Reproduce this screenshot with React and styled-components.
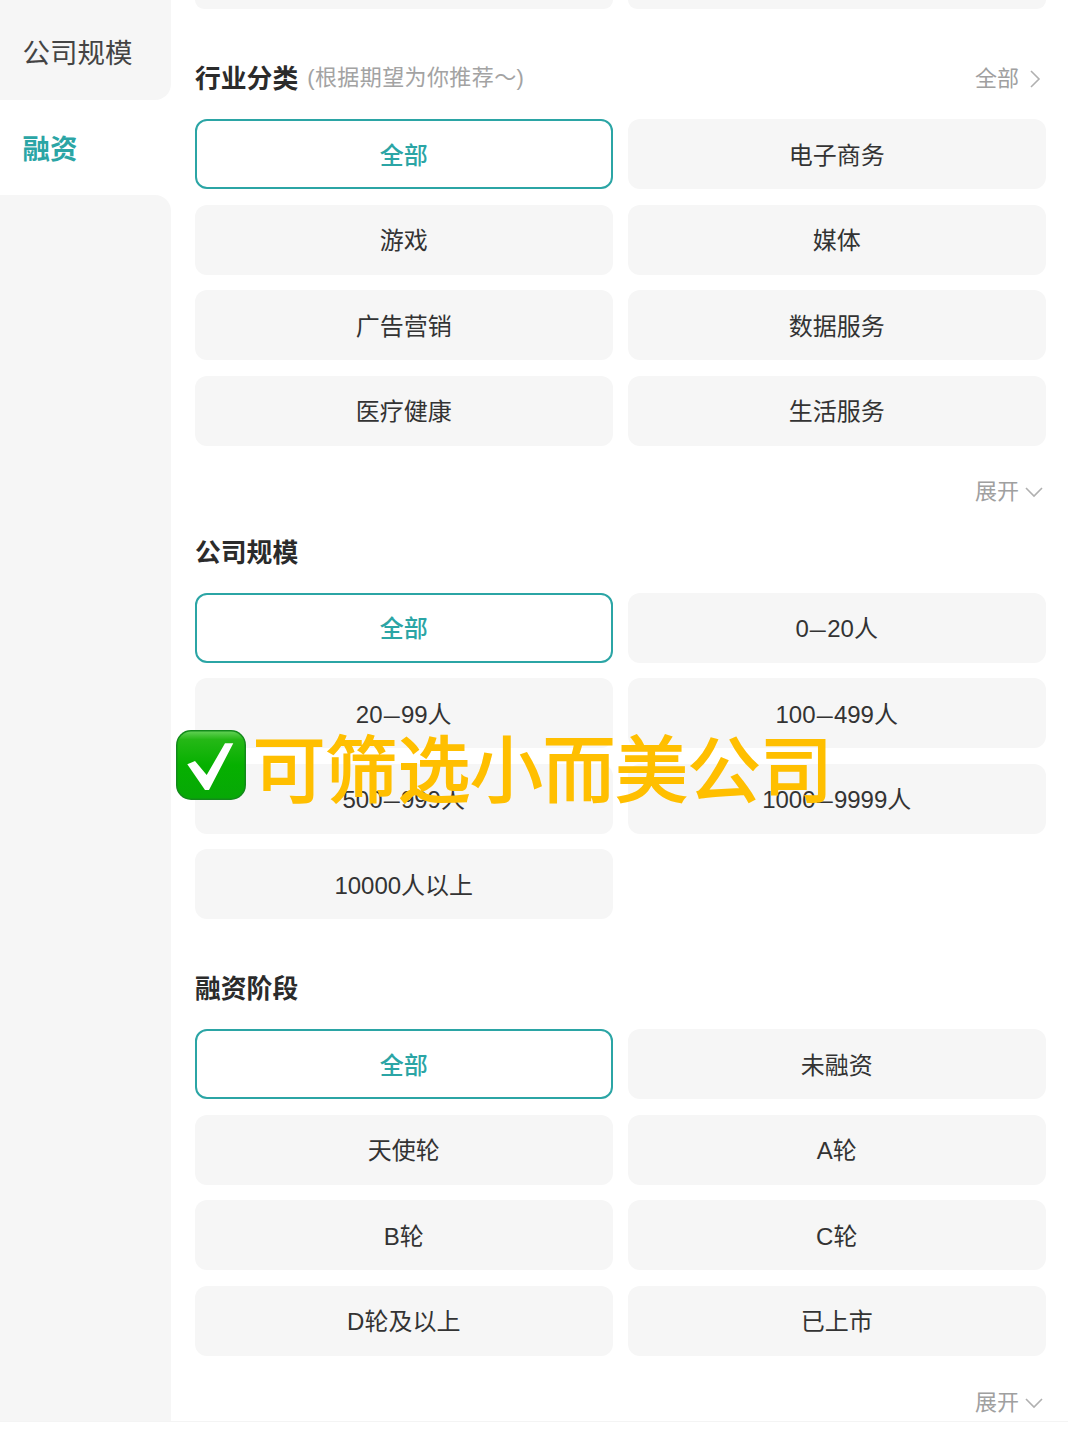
import React from 'react';
import styled, { createGlobalStyle } from 'styled-components';

const teal = '#2ba5a5';
const fontStack = '"Liberation Sans", "Noto Sans CJK SC", sans-serif';

const GlobalStyle = createGlobalStyle`
  html, body {
    margin: 0;
    padding: 0;
    background: #fff;
  }
  body {
    font-family: ${fontStack};
    color: #333;
  }
`;

const Page = styled.div`
  position: relative;
  width: 1080px;
  height: 1440px;
  overflow: hidden;
  display: flex;
  align-items: flex-start;
`;

const Sidebar = styled.div`
  width: 171px;
  height: 1422px;
  flex: none;
  display: flex;
  flex-direction: column;
`;

const SideItem = styled.div`
  height: ${p => p.$height}px;
  flex: ${p => (p.$grow ? 1 : 'none')};
  box-sizing: border-box;
  padding-left: 22.5px;
  padding-top: ${p => p.$top}px;
  font-size: 27.5px;
  line-height: 40px;
  background: ${p => (p.$active ? '#fff' : '#f6f6f6')};
  color: ${p => (p.$active ? teal : '#444')};
  font-weight: ${p => (p.$active ? 700 : 400)};
  border-radius: ${p => p.$radius || '0'};
`;

const Main = styled.div`
  width: 850px;
  margin-left: 24px;
  flex: none;
`;

const Stubs = styled.div`
  display: grid;
  grid-template-columns: 417.5px 417.5px;
  column-gap: 15.5px;
  height: 9px;
`;

const Stub = styled.div`
  background: #f6f6f6;
  border-radius: 0 0 12px 12px;
`;

const SectionHead = styled.div`
  display: flex;
  align-items: center;
  justify-content: space-between;
  height: 40px;
  margin-top: ${p => p.$top}px;
  margin-bottom: ${p => p.$bottom}px;
`;

const TitleWrap = styled.div`
  display: flex;
  align-items: center;
`;

const Title = styled.span`
  font-size: 25.8px;
  line-height: 40px;
  font-weight: 700;
  color: #2b2b2b;
`;

const Hint = styled.span`
  margin-left: 9px;
  margin-top: -2px;
  font-size: 22px;
  line-height: 40px;
  letter-spacing: 0.4px;
  color: #a3a3a3;
`;

const More = styled.div`
  display: flex;
  align-items: center;
  gap: ${p => p.$gap}px;
  font-size: 22px;
  line-height: 32px;
  color: #a0a0a0;
  margin-right: ${p => p.$right}px;
`;

const Grid = styled.div`
  display: grid;
  grid-template-columns: 417.5px 417.5px;
  grid-auto-rows: 70px;
  column-gap: 15.5px;
  row-gap: 15.5px;
`;

const Option = styled.div`
  box-sizing: border-box;
  display: flex;
  align-items: center;
  justify-content: center;
  padding-bottom: 2px;
  font-size: 24px;
  border-radius: 12px;
  background: ${p => (p.$selected ? '#fff' : '#f6f6f6')};
  border: ${p => (p.$selected ? `2px solid ${teal}` : 'none')};
  color: ${p => (p.$selected ? teal : '#333')};
  font-weight: ${p => (p.$selected ? 500 : 400)};
`;

const Dash = styled.span`
  display: inline-block;
  margin: 0 2.5px;
  transform: scaleX(1.2);
`;

const Foot = styled.div`
  display: flex;
  justify-content: flex-end;
  height: 32px;
  margin-top: ${p => p.$top}px;
`;

const BottomLine = styled.div`
  position: absolute;
  left: 0;
  top: 1421px;
  width: 1068px;
  height: 1px;
  background: #f4f4f4;
`;

const Caption = styled.div`
  position: absolute;
  left: 175px;
  top: 725px;
  display: flex;
  align-items: center;
`;

const CaptionText = styled.span`
  margin-left: 6px;
  font-family: "Noto Sans CJK SC", sans-serif;
  font-size: 72px;
  line-height: 80px;
  font-weight: 400;
  letter-spacing: 0.5px;
  color: #ffbf00;
  -webkit-text-stroke: 2px #ffbf00;
`;

const CheckBadge = () => (
  <svg width="72" height="72" viewBox="0 0 72 72">
    <defs>
      <linearGradient id="badge" x1="0" y1="0" x2="0" y2="1">
        <stop offset="0" stopColor="#5fcf52" />
        <stop offset="0.12" stopColor="#25b816" />
        <stop offset="0.5" stopColor="#06b000" />
        <stop offset="1" stopColor="#07a806" />
      </linearGradient>
    </defs>
    <rect x="1" y="1" width="70" height="70" rx="15" fill="#128a1a" />
    <rect x="2.5" y="2.5" width="67" height="67" rx="13.5" fill="url(#badge)" />
    <path d="M12.3 35.3 L20 32 L31.7 46 L50 14.3 L58.3 14.3 L34 61 L30 61 Z" fill="#fff" />
  </svg>
);

const ChevronRight = () => (
  <svg width="12" height="20" viewBox="0 0 12 20" fill="none">
    <path d="M2 2 L10 10 L2 18" stroke="#b0b0b0" strokeWidth="1.6" />
  </svg>
);

const ChevronDown = () => (
  <svg width="18" height="12" viewBox="0 0 18 12" fill="none">
    <path d="M1 2 L9 10 L17 2" stroke="#b0b0b0" strokeWidth="1.6" />
  </svg>
);

const sections = [
  {
    title: '行业分类',
    hint: '(根据期望为你推荐～)',
    top: 50,
    bottom: 20,
    options: ['全部', '电子商务', '游戏', '媒体', '广告营销', '数据服务', '医疗健康', '生活服务'],
    footTop: 30,
    foot: true,
    more: true,
  },
  {
    title: '公司规模',
    top: 25,
    bottom: 20,
    options: ['全部', '0–20人', '20–99人', '100–499人', '500–999人', '1000–9999人', '10000人以上'],
  },
  {
    title: '融资阶段',
    top: 50,
    bottom: 20,
    options: ['全部', '未融资', '天使轮', 'A轮', 'B轮', 'C轮', 'D轮及以上', '已上市'],
    footTop: 31,
    foot: true,
  },
];

// the range dash is wider in the picture than the font's own
const renderLabel = label => {
  const parts = label.split('–');
  if (parts.length === 1) return label;
  return (
    <span>
      {parts[0]}
      <Dash>–</Dash>
      {parts[1]}
    </span>
  );
};

export default function App() {
  return (
    <Page>
      <GlobalStyle />
      <Sidebar>
        <SideItem $height={100} $top={34} $radius="0 0 16px 0">公司规模</SideItem>
        <SideItem $height={95} $top={30} $active>融资</SideItem>
        <SideItem $grow $radius="0 16px 0 0" />
      </Sidebar>
      <Main>
        <Stubs>
          <Stub />
          <Stub />
        </Stubs>
        {sections.map(section => (
          <div key={section.title}>
            <SectionHead $top={section.top} $bottom={section.bottom}>
              <TitleWrap>
                <Title>{section.title}</Title>
                {section.hint && <Hint>{section.hint}</Hint>}
              </TitleWrap>
              {section.more && (
                <More $gap={10} $right={4}>
                  全部
                  <ChevronRight />
                </More>
              )}
            </SectionHead>
            <Grid>
              {section.options.map((label, i) => (
                <Option key={label} $selected={i === 0}>{renderLabel(label)}</Option>
              ))}
            </Grid>
            {section.foot && (
              <Foot $top={section.footTop}>
                <More $gap={6} $right={2}>
                  展开
                  <ChevronDown />
                </More>
              </Foot>
            )}
          </div>
        ))}
      </Main>
      <BottomLine />
      <Caption>
        <CheckBadge />
        <CaptionText>可筛选小而美公司</CaptionText>
      </Caption>
    </Page>
  );
}
